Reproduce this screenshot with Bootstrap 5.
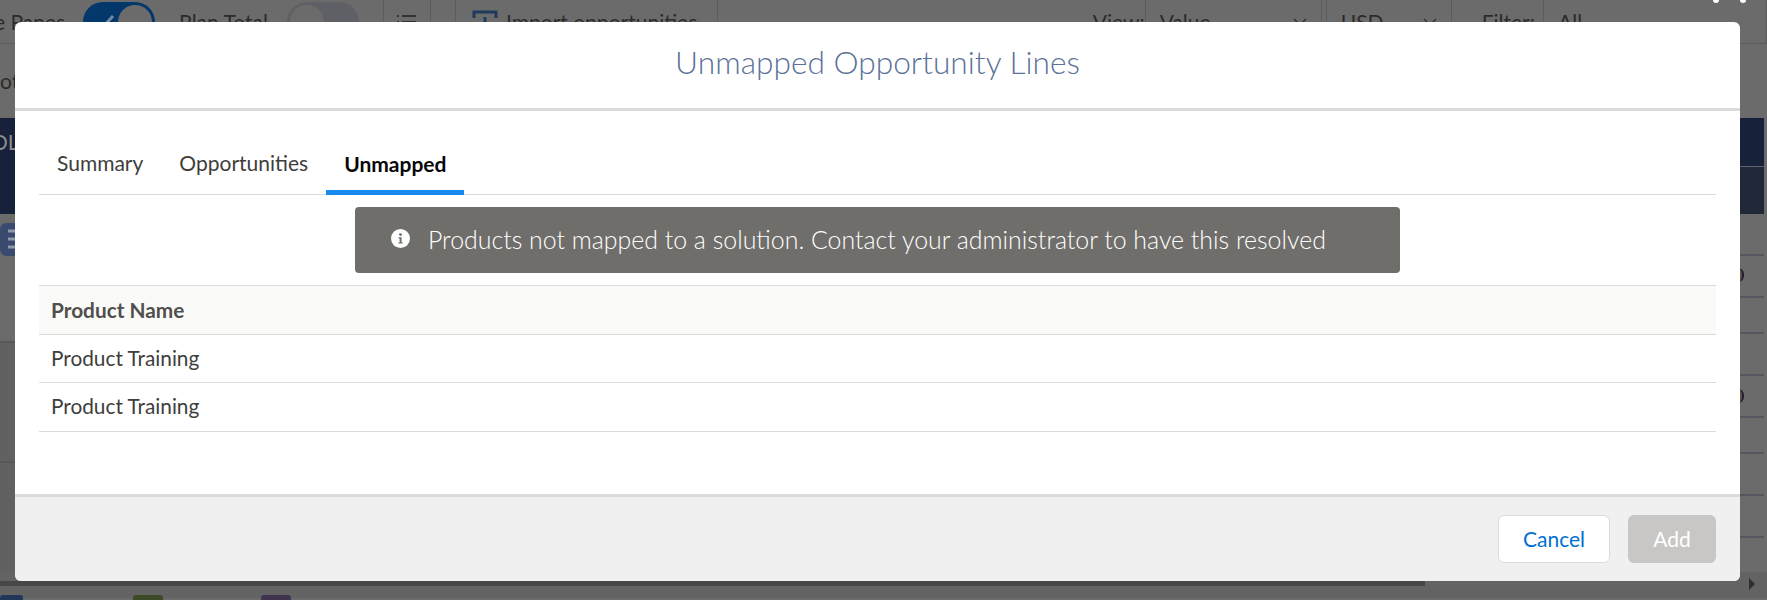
<!DOCTYPE html>
<html lang="en">
<head>
  <meta charset="UTF-8">
  <title>Unmapped Opportunity Lines</title>
  <link href="https://cdn.jsdelivr.net/npm/bootstrap@5.3.3/dist/css/bootstrap.min.css" rel="stylesheet">
  <style>
    body { height: 600px; overflow: hidden; background: #6b6b6b; font-family: "Lato", "Open Sans", sans-serif; color: #2b2b2b; position: relative; }

    /* page behind the backdrop */
    .tool-bar { height: 44px; border-bottom: 1px solid #5c5c5c; overflow: hidden; font-size: 21px; }
    .tool-item { flex: none; }
    .panes-label { margin-left: -6px; }
    .tog { width: 72px; height: 40px; border-radius: 20px; position: relative; flex: none; }
    .tog-on { background: #04386a; margin-left: 18px; }
    .tog-off { background: #5f6065; margin-left: 19px; }
    .tog::after { content: ""; position: absolute; top: 3px; width: 34px; height: 34px; border-radius: 50%; background: #6b6b6b; }
    .tog-on::after { right: 3px; }
    .tog-off::after { left: 3px; }
    .ghost-btn { height: 54px; border: 1px solid #5c5c5c; border-radius: 6px; flex: none; }
    .ghost-sel { height: 54px; border: 1px solid #5c5c5c; border-radius: 6px; flex: none; padding: 0 14px; }
    .second-row { height: 74px; font-size: 21px; }
    .band-a { height: 48px; background: #17213a; color: #8d8d8d; font-size: 21px; margin-right: 3px; }
    .band-a span { margin-left: -9px; }
    .band-b { height: 48px; background: #212838; margin-right: 3px; border-top: 1px solid #5c6270; }
    .band-left { width: 15px; height: 48px; margin-top: -1px; background: #17213a; }
    .row-lines { margin-right: 3px; }
    .line-cell { border-bottom: 2px solid #565660; }
    .left-pane { width: 15px; }
    .left-pane .line-cell { border-color: #58585c; }
    .left-tall { height: 120px; background: #616161; }
    .left-rest { height: 109px; background: #616161; }
    .left-top { height: 120px; }
    .list-ico { display: block; margin-top: 9px; }
    .right-pane { width: 27px; }
    .foot-bar { height: 26px; background: #636363; }
    .foot-arrow { width: 0; height: 0; border-left: 6px solid #2f2f2f; border-top: 6px solid transparent; border-bottom: 6px solid transparent; margin-left: auto; margin-right: 12px; margin-top: 6px; }
    .scroll-thumb { position: absolute; left: 0; top: 581px; width: 1425px; height: 5px; background: #474747; }
    .chip { position: absolute; top: 595px; height: 5px; border-radius: 3px 3px 0 0; }
    .chip-blue { left: 0; width: 23px; background: #21375a; }
    .chip-green { left: 133px; width: 30px; background: #3d4a26; }
    .chip-purple { left: 261px; width: 30px; background: #3f3350; }
    .ring { position: absolute; left: 1738px; width: 6px; height: 14px; border-right: 2px solid #16233a; border-radius: 0 7px 7px 0; background: #6f4a3a; }
    .close-dots { position: absolute; top: -3px; width: 6px; height: 6px; background: #fff; border-radius: 50%; }

    /* modal */
    .sheet { position: absolute; left: 15px; top: 22px; width: 1725px; height: 559px; }
    .sheet .modal-content { height: 100%; border: 0; border-radius: 6px; background: #fff; overflow: hidden; }
    .sheet .modal-header { height: 89px; border-bottom: 3px solid #dddbda; justify-content: center; padding: 0; border-radius: 0; }
    .sheet .modal-title { font-size: 31.7px; font-weight: 300; color: #5c7199; line-height: 1; margin-top: -4px; }
    .sheet .modal-body { padding: 0 24px; }
    .sheet .nav-tabs { height: 84px; border-bottom: 1px solid #dddbda; margin-bottom: 12px; align-items: flex-end; }
    .sheet .nav-link { border: 0; border-radius: 0; margin: 0; padding: 0 18px; height: 53px; line-height: 44px; font-size: 21px; color: #3e3e3c; background: none; border-bottom: 5px solid transparent; }
    .sheet .nav-link.active { color: #080707; font-weight: 700; border-bottom-color: #1589ee; margin-bottom: -1px; }
    .note-bar { width: 1045px; height: 66px; background: #706e6b; color: #fff; border: 0; border-radius: 4px; font-size: 24.9px; font-weight: 300; padding: 0 0 0 36px; margin: 0 auto 12px; }
    .note-ico { margin-top: -3px; margin-right: 18px; }
    .sheet .table { font-size: 20.8px; margin: 0; color: #3e3e3c; border-collapse: separate; border-spacing: 0; border-top: 1px solid #dddbda; }
    .sheet .table th { background: #fafaf9; color: #514f4d; font-weight: 700; height: 49px; padding: 0 12px 1px; vertical-align: middle; border-bottom: 1px solid #dddbda; }
    .sheet .table td { height: 48px; padding: 0 12px 2px; vertical-align: middle; border-bottom: 1px solid #dddbda; }
    .sheet .table tr:last-child td { height: 49px; }
    .sheet .modal-footer { height: 87px; background: #f0f0f0; border-top: 3px solid #dddbda; padding: 0 24px; border-radius: 0; flex: none; margin-top: auto; }
    .sheet .btn { height: 48px; font-size: 21px; border-radius: 6px; margin: 0; }
    .btn-cancel { width: 112px; background: #fff; border: 1px solid #dddbda; color: #0070d2; }
    .btn-add { width: 88px; margin-left: 18px !important; background: #c9c7c5; border: 0; color: #fff; }
    .btn-add:disabled { background: #c9c7c5; color: #fff; opacity: 1; }
  </style>
</head>
<body>
  <!-- page under the modal, dimmed -->
  <div class="tool-bar d-flex align-items-center">
    <span class="tool-item panes-label">e Panes</span>
    <div class="tog tog-on d-flex align-items-center">
      <svg width="28" height="22" viewBox="0 0 28 22" class="ms-2"><path d="M4 12l6 6L22 5" fill="none" stroke="#6f8aa6" stroke-width="3"/></svg>
    </div>
    <span class="tool-item ms-4">Plan Total</span>
    <div class="tog tog-off"></div>
    <div class="ghost-btn ms-4 d-flex align-items-center justify-content-center" style="width:48px">
      <svg width="22" height="20" viewBox="0 0 22 20"><path d="M6 4h14M6 10h14M6 16h14M1 4h2M1 10h2M1 16h2" stroke="#333" stroke-width="2"/></svg>
    </div>
    <div class="ghost-btn d-flex align-items-center" style="margin-left:24px;width:263px">
      <svg width="26" height="26" viewBox="0 0 26 26" class="ms-3"><path d="M2 9V3h22v6M13 8v16" fill="none" stroke="#1f3a5c" stroke-width="3"/></svg>
      <span class="ms-2">Import opportunities</span>
    </div>
    <div class="flex-grow-1"></div>
    <span class="tool-item">View:</span>
    <div class="ghost-sel d-flex align-items-center justify-content-between" style="width:177px"><span>Value</span><svg width="14" height="10" viewBox="0 0 14 10"><path d="M1 2l6 6 6-6" fill="none" stroke="#333" stroke-width="1.5"/></svg></div>
    <div class="ghost-sel ms-1 d-flex align-items-center justify-content-between" style="width:126px"><span>USD</span><svg width="14" height="10" viewBox="0 0 14 10"><path d="M1 2l6 6 6-6" fill="none" stroke="#333" stroke-width="1.5"/></svg></div>
    <span class="tool-item" style="margin-left:30px">Filter:</span>
    <div class="ghost-sel ms-2 d-flex align-items-center" style="width:224px"><span>All</span></div>
  </div>
  <div class="second-row d-flex align-items-center"><span>ot</span></div>
  <div class="band-a d-flex align-items-center"><span>OL</span></div>
  <div class="band-b"><div class="band-left"></div></div>
  <div class="row-lines d-flex justify-content-between">
    <div class="left-pane">
      <div class="left-top line-cell">
        <svg class="list-ico" width="15" height="33" viewBox="0 0 15 33"><path d="M15 0H7Q0 0 0 7v19q0 7 7 7h8z" fill="#3a4a6e"/><path d="M8 8h7M8 16h7M8 24h7" stroke="#8f98aa" stroke-width="3"/></svg>
      </div>
      <div class="left-tall line-cell"></div>
      <div class="left-rest"></div>
    </div>
    <div class="right-pane">
      <div class="line-cell" style="height:42px"></div>
      <div class="line-cell" style="height:42px"></div>
      <div class="line-cell" style="height:36px"></div>
      <div class="line-cell" style="height:42px"></div>
      <div class="line-cell" style="height:42px"></div>
      <div class="line-cell" style="height:36px"></div>
      <div class="line-cell" style="height:42px"></div>
      <div class="line-cell" style="height:42px"></div>
      <div style="height:25px"></div>
    </div>
  </div>
  <div class="foot-bar d-flex"><div class="foot-arrow"></div></div>
  <div class="scroll-thumb"></div>
  <div class="chip chip-blue"></div>
  <div class="chip chip-green"></div>
  <div class="chip chip-purple"></div>
  <div class="ring" style="top:268px"></div>
  <div class="ring" style="top:389px"></div>
  <div class="close-dots" style="left:1713px"></div>
  <div class="close-dots" style="left:1740px"></div>

  <!-- modal -->
  <div class="sheet">
    <div class="modal-content">
      <div class="modal-header">
        <h2 class="modal-title">Unmapped Opportunity Lines</h2>
      </div>
      <div class="modal-body">
        <ul class="nav nav-tabs">
          <li class="nav-item"><a class="nav-link" href="#">Summary</a></li>
          <li class="nav-item"><a class="nav-link" href="#">Opportunities</a></li>
          <li class="nav-item"><a class="nav-link active" href="#">Unmapped</a></li>
        </ul>
        <div class="note-bar d-flex align-items-center">
          <svg width="19" height="19" viewBox="0 0 19 19" class="note-ico flex-shrink-0">
            <circle cx="9.5" cy="9.5" r="9.5" fill="#fff"/>
            <circle cx="9.5" cy="5.6" r="1.4" fill="#706e6b"/>
            <path d="M7.6 8.2h3v5.2h1.2v1.2H7.4v-1.2h1.2V9.4h-1z" fill="#706e6b"/>
          </svg>
          <span>Products not mapped to a solution. Contact your administrator to have this resolved</span>
        </div>
        <table class="table">
          <thead><tr><th>Product Name</th></tr></thead>
          <tbody>
            <tr><td>Product Training</td></tr>
            <tr><td>Product Training</td></tr>
          </tbody>
        </table>
      </div>
      <div class="modal-footer">
        <button type="button" class="btn btn-cancel">Cancel</button>
        <button type="button" class="btn btn-add" disabled>Add</button>
      </div>
    </div>
  </div>
  <script src="https://cdn.jsdelivr.net/npm/bootstrap@5.3.3/dist/js/bootstrap.bundle.min.js"></script>
</body>
</html>
